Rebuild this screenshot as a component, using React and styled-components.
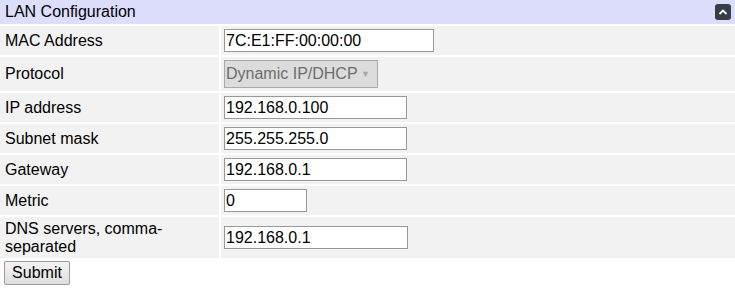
import React from "react";
import styled, { createGlobalStyle } from "styled-components";

const GlobalStyle = createGlobalStyle`
  body {
    margin: 0;
    background: #ffffff;
    font-family: "Liberation Sans", Arial, sans-serif;
    font-size: 16px;
    color: #000;
  }
`;

const Panel = styled.form`
  width: 735px;
`;

const Header = styled.div`
  display: flex;
  align-items: center;
  justify-content: space-between;
  height: 24px;
  padding: 0 4px 0 5px;
  background-color: #ddddfc;
  box-sizing: border-box;
`;

const Title = styled.span`
  font-size: 16px;
  line-height: 18px;
`;

const Collapse = styled.button`
  display: flex;
  align-items: center;
  justify-content: center;
  width: 16px;
  height: 16px;
  padding: 0;
  border: none;
  border-radius: 3px;
  background-color: #363f48;
  cursor: pointer;
`;

const Grid = styled.div`
  display: grid;
  grid-template-columns: 219px 1fr;
  gap: 2px;
  margin-top: 2px;
`;

const Label = styled.div`
  display: flex;
  align-items: center;
  padding: 3px 5px;
  background-color: #f2f2f2;
  line-height: 17.5px;
`;

const Value = styled.div`
  display: flex;
  align-items: center;
  padding: 3px 3px;
  background-color: #f2f2f2;
`;

const Field = styled.input`
  width: ${(p) => p.$width}px;
  height: 23px;
  box-sizing: border-box;
  border: 1px solid #999;
  padding: 0 1px;
  margin: 0;
  font-family: "Liberation Sans", Arial, sans-serif;
  font-size: 16px;
  color: #000;
  background: #fff;
`;

const Select = styled.div`
  display: flex;
  align-items: center;
  justify-content: space-between;
  width: 154px;
  height: 28px;
  box-sizing: border-box;
  padding: 0 7px 0 1px;
  border: 1px solid #aaa;
  background-color: #dcdcdc;
  color: #6d6d6d;
  font-size: 16px;
  white-space: nowrap;
`;

const Arrow = styled.span`
  font-size: 9px;
  color: #a8a8a8;
`;

const SubmitButton = styled.button`
  margin: 3px 0 0 4px;
  width: 66px;
  height: 24px;
  padding: 0;
  border: 1px solid #9a9a9a;
  border-radius: 2px;
  background: linear-gradient(#f4f4f4, #dedede);
  font-family: "Liberation Sans", Arial, sans-serif;
  font-size: 16px;
  color: #000;
`;

const rows = [
  { label: "MAC Address", value: "7C:E1:FF:00:00:00", width: 210 },
  { label: "Protocol", select: "Dynamic IP/DHCP" },
  { label: "IP address", value: "192.168.0.100", width: 183 },
  { label: "Subnet mask", value: "255.255.255.0", width: 183 },
  { label: "Gateway", value: "192.168.0.1", width: 183 },
  { label: "Metric", value: "0", width: 83 },
  { label: "DNS servers, comma-separated", value: "192.168.0.1", width: 184 },
];

export default function App() {
  return (
    <>
      <GlobalStyle />
      <Panel onSubmit={(e) => e.preventDefault()}>
        <Header>
          <Title>LAN Configuration</Title>
          <Collapse type="button" aria-label="Collapse">
            <svg width="10" height="6" viewBox="0 0 10 6">
              <path d="M1.5 5 L5 1.5 L8.5 5" stroke="#fff" strokeWidth="1.8" fill="none" />
            </svg>
          </Collapse>
        </Header>
        <Grid>
          {rows.map((r) => (
            <React.Fragment key={r.label}>
              <Label>{r.label}</Label>
              <Value>
                {r.select ? (
                  <Select>
                    {r.select}
                    <Arrow>▼</Arrow>
                  </Select>
                ) : (
                  <Field defaultValue={r.value} $width={r.width} />
                )}
              </Value>
            </React.Fragment>
          ))}
        </Grid>
        <SubmitButton type="submit">Submit</SubmitButton>
      </Panel>
    </>
  );
}
